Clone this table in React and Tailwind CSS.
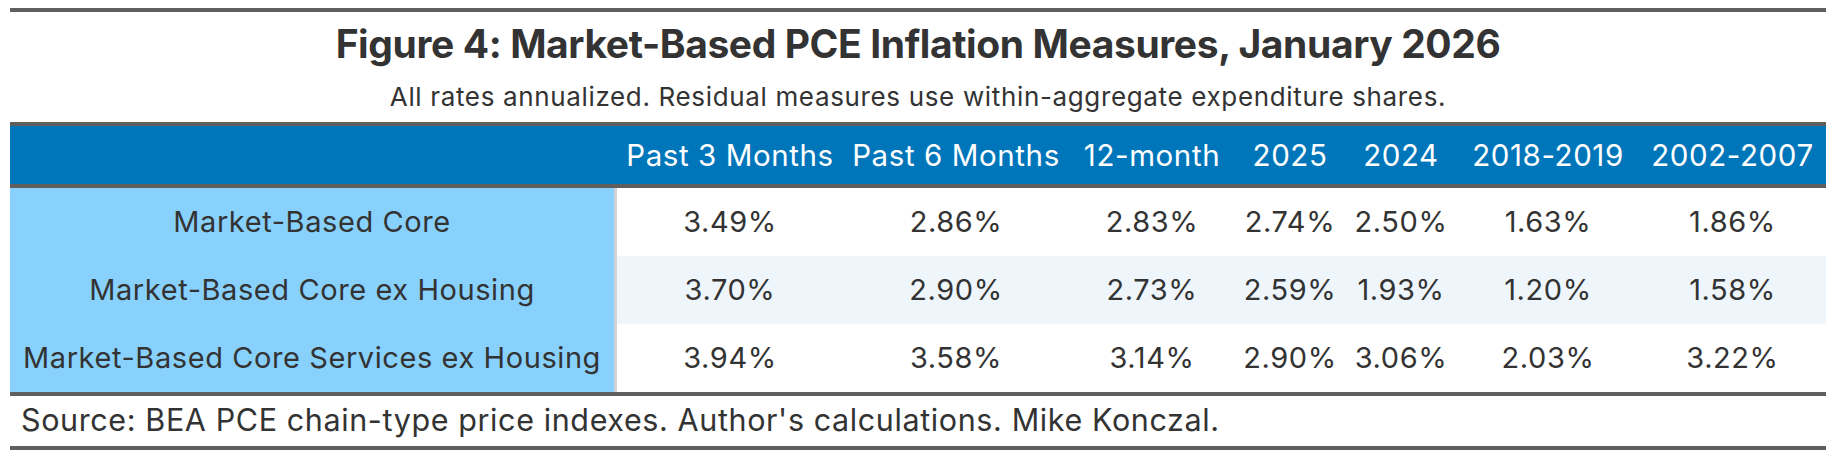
import React from "react";

const cols = "grid grid-cols-[604px_3px_226px_226px_166px_110px_112px_182px_187px]";

const headers = ["Past 3 Months", "Past 6 Months", "12-month", "2025", "2024", "2018-2019", "2002-2007"];

const rows = [
  ["Market-Based Core", "3.49%", "2.86%", "2.83%", "2.74%", "2.50%", "1.63%", "1.86%"],
  ["Market-Based Core ex Housing", "3.70%", "2.90%", "2.73%", "2.59%", "1.93%", "1.20%", "1.58%"],
  ["Market-Based Core Services ex Housing", "3.94%", "3.58%", "3.14%", "2.90%", "3.06%", "2.03%", "3.22%"],
];

export default function App() {
  return (
    <div
      className="w-[1836px] h-[458px] bg-white px-[10px] pt-[8px] text-[#333333]"
      style={{ fontFamily: "Inter, Roboto, 'Noto Sans', sans-serif" }}
    >
      <div className="border-t-[4px] border-[#5f5f5f] h-[114px] flex flex-col items-center">
        <div className="pt-[9px] text-[39px] leading-[46px] font-bold tracking-[-0.01em]">
          Figure 4: Market-Based PCE Inflation Measures, January 2026
        </div>
        <div className="pt-[15px] text-[26px] leading-[30px] tracking-[0.025em]">
          All rates annualized. Residual measures use within-aggregate expenditure shares.
        </div>
      </div>
      <div className={`${cols} border-t-[4px] border-b-[4px] border-[#5f5f5f] bg-[#0076ba] h-[66px] text-white text-[29.5px] tracking-[0.02em]`}>
        <div className="col-span-2" />
        {headers.map((h) => (
          <div key={h} className="flex items-center justify-center whitespace-nowrap">
            {h}
          </div>
        ))}
      </div>
      <div className="flex flex-col">
        {rows.map((r, i) => (
          <div
            key={r[0]}
            className={`${cols} h-[68px] text-[29px] tracking-[0.02em] ${i === 1 ? "bg-[#eef6fc]" : "bg-white"}`}
          >
            <div className="bg-[#88d1fd] flex items-center justify-center whitespace-nowrap">{r[0]}</div>
            <div className="bg-[#d3d3d3]" />
            {r.slice(1).map((v, j) => (
              <div key={j} className="flex items-center justify-center">
                {v}
              </div>
            ))}
          </div>
        ))}
      </div>
      <div className="border-t-[4px] border-b-[4px] border-[#5f5f5f] h-[58px] flex items-center pl-[11px] pb-[3px] text-[30.5px] tracking-[0.02em]">
        Source: BEA PCE chain-type price indexes. Author's calculations. Mike Konczal.
      </div>
    </div>
  );
}
